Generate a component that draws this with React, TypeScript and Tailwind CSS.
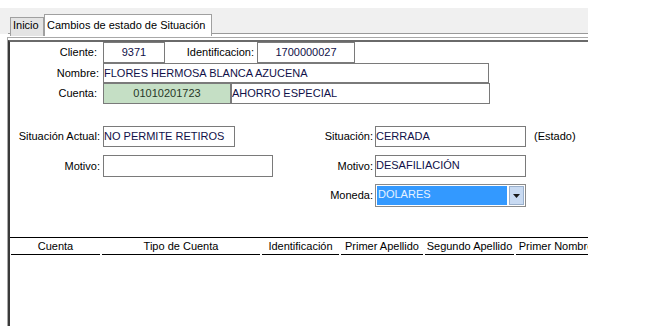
import React from 'react';

const font = { fontFamily: '"Liberation Sans", Arial, sans-serif' };

const boxCls = 'border border-[#7a7a7a] text-[11px] leading-none flex items-center whitespace-nowrap overflow-hidden';
const white = 'bg-white text-[#101048]';

function Label({ text, className }: { text: string; className: string }) {
  return <div className={`text-right text-black text-[11px] leading-none flex items-center justify-end ${className}`}>{text}</div>;
}

const columns = [
  { name: 'Cuenta', w: 'w-[89px]' },
  { name: 'Tipo de Cuenta', w: 'w-[158px]' },
  { name: 'Identificación', w: 'w-[77px]' },
  { name: 'Primer Apellido', w: 'w-[82px]' },
  { name: 'Segundo Apellido', w: 'w-[89px]' },
  { name: 'Primer Nombre', w: 'w-[80px]' },
];

export default function App() {
  return (
    <div className="w-[663px] h-[326px] bg-white overflow-hidden pt-[8px]" style={font}>
      <div className="w-[588px]">
        {/* tab strip */}
        <div className="h-[26px] bg-[#f0f0f0] flex items-end">
          <div className="flex-1 h-full flex items-end pl-[8px]">
            <div className="flex-1 h-[1px] bg-[#999]" />
          </div>
        </div>
        <div className="relative">
          <div className="absolute left-[10px] -top-[20px] flex items-end">
            <div className="h-[19px] w-[34px] bg-[#e4e4e4] border border-[#a0a0a0] border-b-0 text-[11px] flex items-end pb-[3px] pl-[2px]">Inicio</div>
            <div className="h-[22px] w-[168px] bg-white border border-[#a0a0a0] border-b-0 text-[11px] flex items-center pl-[2px] pb-[1px]">Cambios de estado de Situación</div>
          </div>
        </div>
        <div className="h-[3px]" />
        {/* frame */}
        <div className="ml-[7px] border-t border-l border-[#a8a8a8] h-[289px]">
          <div className="mt-[2px] border-t-2 border-l-2 border-t-[#6a6a6a] border-l-[#3a3a3a] h-full">
            <div className="flex">
              <Label text="Cliente:" className="w-[93px] h-[21px] pr-[6px]" />
              <div className={`${boxCls} ${white} w-[62px] h-[21px] justify-center`}>9371</div>
              <Label text="Identificacion:" className="w-[92px] h-[21px] pr-[3px]" />
              <div className={`${boxCls} ${white} w-[98px] h-[21px] justify-center`}>1700000027</div>
            </div>
            <div className="flex">
              <Label text="Nombre:" className="w-[93px] h-[20px] pr-[4px]" />
              <div className={`${boxCls} ${white} w-[386px] h-[20px]`}>FLORES HERMOSA BLANCA AZUCENA</div>
            </div>
            <div className="flex">
              <Label text="Cuenta:" className="w-[93px] h-[21px] pr-[6px]" />
              <div className={`${boxCls} w-[128px] h-[21px] justify-center bg-[#c5dfc5] text-[#283828]`}>01010201723</div>
              <div className={`${boxCls} ${white} w-[259px] h-[21px]`}>AHORRO ESPECIAL</div>
            </div>

            <div className="flex mt-[22px]">
              <div className="w-[316px] flex">
                <Label text="Situación Actual:" className="w-[93px] h-[21px] pr-[3px]" />
                <div className={`${boxCls} ${white} w-[132px] h-[21px] items-start pt-[4px]`}>NO PERMITE RETIROS</div>
              </div>
              <Label text="Situación:" className="w-[49px] h-[21px] pr-[2px]" />
              <div className={`${boxCls} ${white} w-[151px] h-[21px] items-start pt-[4px]`}>CERRADA</div>
              <div className="text-[11px] ml-[8px] flex items-center h-[21px]">(Estado)</div>
            </div>
            <div className="flex mt-[8px]">
              <div className="w-[316px] flex">
                <Label text="Motivo:" className="w-[93px] h-[22px] pr-[3px]" />
                <div className={`${boxCls} ${white} w-[170px] h-[22px]`} />
              </div>
              <Label text="Motivo:" className="w-[49px] h-[22px] pr-[2px]" />
              <div className={`${boxCls} ${white} w-[151px] h-[22px] items-start pt-[4px]`}>DESAFILIACIÓN</div>
            </div>
            <div className="flex mt-[7px]">
              <div className="w-[316px]" />
              <Label text="Moneda:" className="w-[49px] h-[23px] pr-[2px]" />
              <div className="w-[151px] h-[23px] border border-[#8a8a8a] bg-white p-[1px] flex">
                <div className="flex-1 bg-[#3399ff] text-[#e6f2ff] text-[11px] leading-none pt-[3px] pl-[1px]">DOLARES</div>
                <div className="w-[15px] ml-[2px] bg-[#c8daf2] border border-[#9ab0cc] flex items-center justify-center">
                  <svg width="7" height="4" viewBox="0 0 7 4"><path d="M0 0h7L3.5 4z" fill="#1a1a1a" /></svg>
                </div>
              </div>
            </div>

            {/* grid header */}
            <div className="mt-[30px] border-t border-black w-full overflow-hidden">
              <div className="flex pl-[1px] w-[700px] shadow-[0_2px_2px_rgba(0,0,0,0.06)]">
                {columns.map((c) => (
                  <div key={c.name} className={`${c.w} mr-[2px] h-[17px] border-b border-black text-[11px] leading-none flex items-center justify-center whitespace-nowrap shrink-0`}>
                    {c.name}
                  </div>
                ))}
              </div>
            </div>
          </div>
        </div>
      </div>
    </div>
  );
}
